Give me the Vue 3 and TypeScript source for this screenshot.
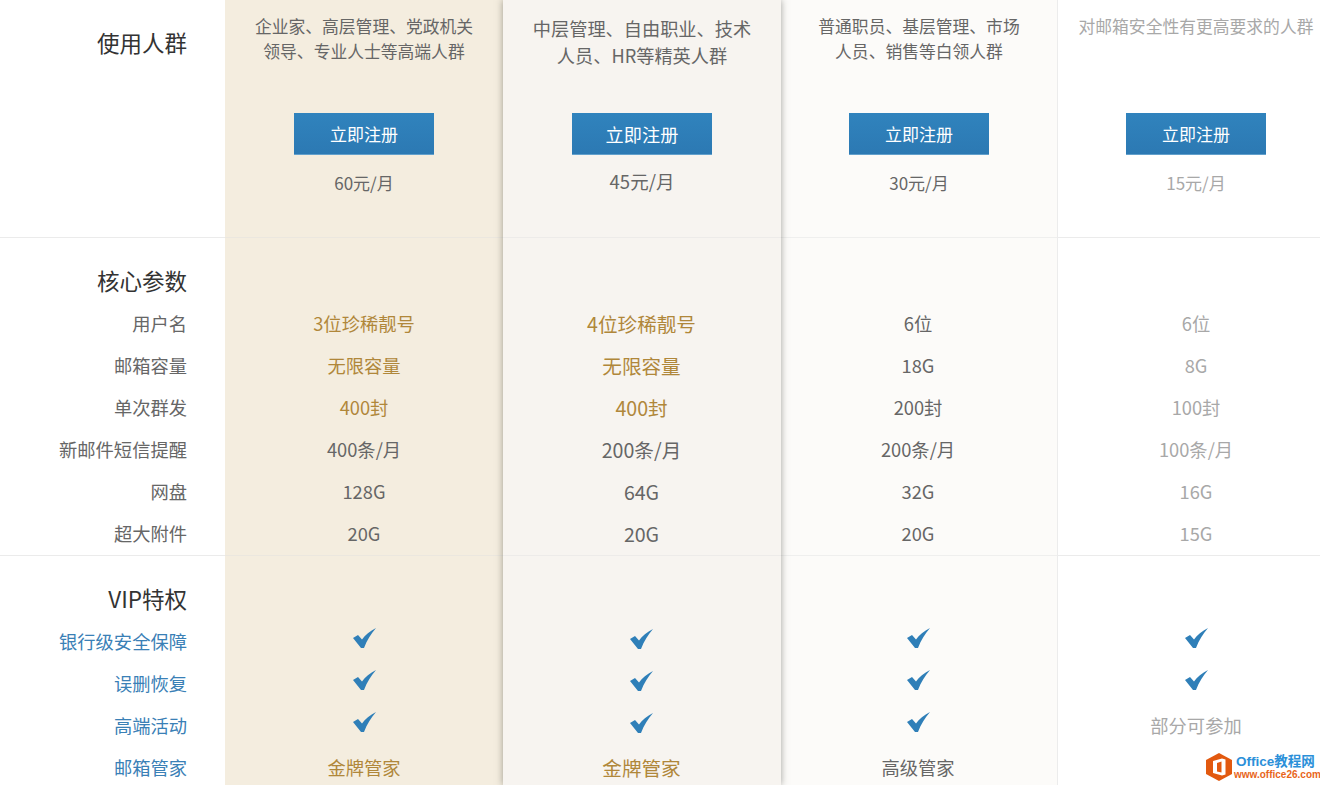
<script setup lang="ts">
type Cell = { text?: string; gold?: boolean; check?: boolean };
const t = (text: string, gold = false): Cell => ({ text, gold });
const c: Cell = { check: true };

const labels = {
  intro: '使用人群',
  coreTitle: '核心参数',
  core: ['用户名', '邮箱容量', '单次群发', '新邮件短信提醒', '网盘', '超大附件'],
  vipTitle: 'VIP特权',
  vip: ['银行级安全保障', '误删恢复', '高端活动', '邮箱管家'],
};

const plans = [
  {
    key: 'p1',
    desc: ['企业家、高层管理、党政机关', '领导、专业人士等高端人群'],
    price: '60元/月',
    core: [t('3位珍稀靓号', true), t('无限容量', true), t('400封', true), t('400条/月'), t('128G'), t('20G')],
    vip: [c, c, c, t('金牌管家', true)],
  },
  {
    key: 'p2',
    desc: ['中层管理、自由职业、技术', '人员、HR等精英人群'],
    price: '45元/月',
    core: [t('4位珍稀靓号', true), t('无限容量', true), t('400封', true), t('200条/月'), t('64G'), t('20G')],
    vip: [c, c, c, t('金牌管家', true)],
  },
  {
    key: 'p3',
    desc: ['普通职员、基层管理、市场', '人员、销售等白领人群'],
    price: '30元/月',
    core: [t('6位'), t('18G'), t('200封'), t('200条/月'), t('32G'), t('20G')],
    vip: [c, c, c, t('高级管家')],
  },
  {
    key: 'p4',
    desc: ['对邮箱安全性有更高要求的人群'],
    price: '15元/月',
    core: [t('6位'), t('8G'), t('100封'), t('100条/月'), t('16G'), t('15G')],
    vip: [c, c, t('部分可参加'), t('')],
  },
];
</script>

<template>
  <div class="page">
    <div class="col labels">
      <section class="intro">
        <h3 class="intro-title">{{ labels.intro }}</h3>
      </section>
      <section class="group">
        <h3 class="group-title">{{ labels.coreTitle }}</h3>
        <div v-for="l in labels.core" :key="l" class="row">{{ l }}</div>
      </section>
      <section class="group last">
        <h3 class="group-title">{{ labels.vipTitle }}</h3>
        <div v-for="l in labels.vip" :key="l" class="row link">{{ l }}</div>
      </section>
    </div>

    <div v-for="p in plans" :key="p.key" class="col plan" :class="p.key">
      <section class="intro">
        <div class="desc">
          <p v-for="line in p.desc" :key="line">{{ line }}</p>
        </div>
        <a class="btn">立即注册</a>
        <div class="price">{{ p.price }}</div>
      </section>
      <section class="group">
        <div class="group-title"></div>
        <div v-for="(cell, i) in p.core" :key="i" class="row" :class="{ gold: cell.gold }">{{ cell.text }}</div>
      </section>
      <section class="group last">
        <div class="group-title"></div>
        <div v-for="(cell, i) in p.vip" :key="i" class="row" :class="{ gold: cell.gold }">
          <svg v-if="cell.check" class="check" viewBox="0 0 23 20" width="23" height="20">
            <path d="M0 10 L5 7 L9 11.500 C12 7 17 3 23 0 C18 6 14 12 11 20 L8 20 Z" fill="#2f7fb8" />
          </svg>
          <template v-else>{{ cell.text }}</template>
        </div>
      </section>
    </div>

    <div class="mark">
      <svg class="mark-logo" viewBox="0 0 26 28" width="26" height="28">
        <path d="M13 0 L26 7 L26 21 L13 28 L0 21 L0 7 Z" fill="#e2590f" />
        <path d="M7 8 L16 5.500 L19.500 6.500 L19.500 21.500 L16 22.500 L7 20 Z M11 10 L11 18.500 L15.500 19.500 L15.500 8.500 Z" fill="#fff" fill-rule="evenodd" />
      </svg>
      <div class="mark-text">
        <div class="mark-top">Office教程网</div>
        <div class="mark-url">www.office26.com</div>
      </div>
    </div>
  </div>
</template>

<style>
html,
body {
  margin: 0;
  background: #fff;
  overflow: hidden;
}
</style>

<style scoped>
.page {
  position: relative;
  display: flex;
  width: 1320px;
  height: 785px;
  overflow: hidden;
  background: #fff;
  font-family: "Noto Sans CJK SC", "Liberation Sans", sans-serif;
  font-size: 18.300px;
  color: #666;
}
.col {
  flex: none;
  box-sizing: border-box;
  width: 277px;
  text-align: center;
}
.labels {
  width: 225px;
  text-align: right;
  color: #666;
}
.plan {
  position: relative;
}
.p1 {
  background: #f4eddf;
  width: 278px;
}
.p2 {
  background: #f7f4f0;
  width: 278px;
  z-index: 1;
  box-shadow: 0 0 7px rgba(70, 70, 60, 0.5);
  font-size: 19.600px;
}
.p3 {
  background: #fcfbf9;
  border-right: 1px solid #ececec;
  color: #666;
}
.p4 {
  background: #fff;
  width: 276px;
  color: #a8a8a8;
}
section {
  box-sizing: border-box;
  border-bottom: 1px solid rgba(225, 225, 225, 0.45);
}
.labels section,
.p4 section {
  border-bottom-color: #ebebeb;
}
section.last {
  border-bottom: 0;
}
h3 {
  margin: 0;
  font-weight: 400;
}
.intro {
  height: 238px;
  display: flex;
  flex-direction: column;
  align-items: center;
}
.labels .intro {
  align-items: flex-end;
}
.intro-title,
.group-title {
  font-size: 22.500px;
  color: #333;
  padding-right: 38px;
  line-height: 32px;
}
.intro-title {
  margin-top: 26px;
}
.desc {
  height: 113px;
  padding-top: 14px;
  box-sizing: border-box;
  font-size: 16.800px;
  line-height: 25px;
  white-space: nowrap;
}
.desc p {
  margin: 0;
}
.p2 .desc {
  padding-top: 15px;
  font-size: 18.200px;
  line-height: 27px;
}
.btn {
  display: block;
  width: 140px;
  height: 42px;
  box-sizing: border-box;
  background: linear-gradient(#3083bd, #2c79b3);
  border-bottom: 1px solid #62a0cc;
  color: #fff;
  font-size: 17px;
  line-height: 42px;
}
.p2 .btn {
  font-size: 18.200px;
}
.price {
  margin-top: 15px;
  line-height: 26px;
  font-size: 17px;
}
.p2 .price {
  margin-top: 13px;
  font-size: 18.500px;
}
.group {
  height: 318px;
}
.group.last {
  height: 229px;
}
.group-title {
  height: 65px;
  box-sizing: border-box;
  padding-top: 26px;
}
.row {
  display: flow-root;
  height: 42px;
  line-height: 40px;
  white-space: nowrap;
}
.p2 .row {
  line-height: 42px;
  padding-right: 1px;
}
.p3 .row {
  padding-right: 2px;
}
.labels .row {
  padding-right: 38px;
}
.link {
  color: #3a80b6;
}
.gold {
  color: #b0873a;
}
.check {
  display: block;
  margin: 7px auto 0;
}
.p2 .check {
  margin-top: 8px;
}
.mark {
  position: absolute;
  left: 1205px;
  top: 750px;
  width: 115px;
  height: 33px;
  display: flex;
  align-items: center;
  gap: 2px;
  background: #fff;
}
.mark-logo {
  flex: none;
  margin-left: 1px;
}
.mark-text {
  font-family: "Liberation Sans", "Noto Sans CJK SC", sans-serif;
  font-weight: 700;
  white-space: nowrap;
}
.mark-top {
  font-size: 13.500px;
  line-height: 15px;
  padding-left: 2px;
  color: #2b90d9;
}
.mark-url {
  font-size: 10px;
  line-height: 11px;
  color: #e8651a;
}
</style>
